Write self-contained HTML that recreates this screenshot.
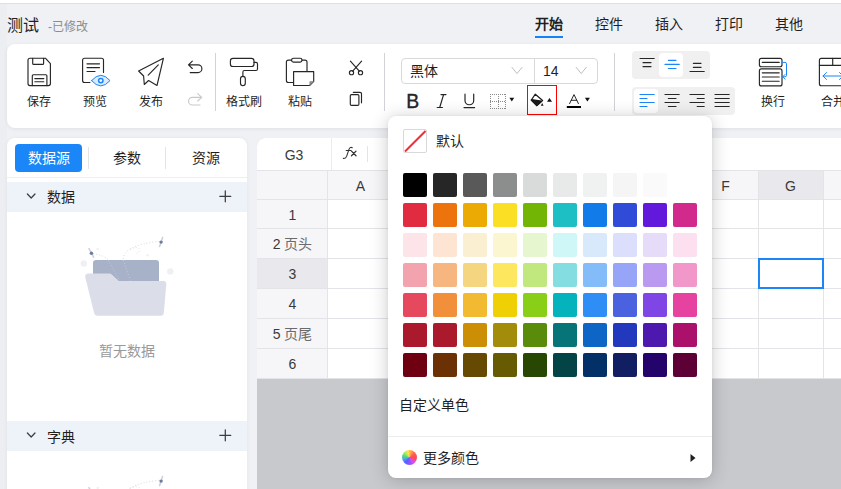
<!DOCTYPE html>
<html lang="zh-CN">
<head>
<meta charset="utf-8">
<title>测试</title>
<style>
*{box-sizing:border-box;margin:0;padding:0}
html,body{width:841px;height:489px;overflow:hidden}
body{position:relative;background:#eff1f5;font-family:"Liberation Sans",sans-serif;font-size:14px;color:#1f1f1f}
.abs{position:absolute}
.topstrip{left:0;top:0;width:841px;height:4px;background:#fff;border-bottom:1px solid #dfe0e3}
.title{left:7px;top:15px;font-size:16px;line-height:22px;color:#1f1f1f;white-space:nowrap}
.title small{font-size:12px;color:#8c8c8c;margin-left:9px}
.tab{top:14px;width:28px;font-size:14px;line-height:20px;color:#1f1f1f;white-space:nowrap;text-align:center}
.tab.on{font-weight:bold}
.tabline{left:535px;top:36px;width:28px;height:2px;background:#1284f8}
.toolbar{left:7px;top:44px;width:900px;height:84px;background:#fff;border-radius:8px;box-shadow:0 1px 4px rgba(0,0,0,.07)}
.lbl{font-size:12px;line-height:16px;color:#1f1f1f;white-space:nowrap;text-align:center;top:94px}
.vsep{width:1px;background:#d2d3d6;top:53px;height:58px}
svg{position:absolute;overflow:visible}
.sel{left:401px;top:58px;width:197px;height:26px;border:1px solid #d9d9d9;border-radius:4px;background:#fff}
.sel i{position:absolute;left:132px;top:0;width:1px;height:24px;background:#d9d9d9}
.grp{background:#f0f0f0;border-radius:4px;height:28px;left:632px}
.grp b{position:absolute;top:2px;width:24px;height:24px;background:#fff;border-radius:4px}
/* left panel */
.lp{left:7px;top:138px;width:240px;height:360px;background:#fff;border-radius:8px;overflow:hidden;box-shadow:0 0 4px rgba(0,0,0,.05)}
.lpbtn{left:8px;top:6px;width:67px;height:28px;border-radius:4px;background:#1a86f8;color:#fff;text-align:center;line-height:28px;font-size:14px}
.lptab{top:6px;width:60px;height:28px;line-height:28px;text-align:center;font-size:14px;color:#1f1f1f}
.lpsep{top:9px;width:1px;height:22px;background:#e4e4e6}
.lpline{left:0;top:39px;width:240px;height:1px;background:#eeeff2}
.sec{left:0;width:240px;height:30px;background:#eef3f9}
.sec span{position:absolute;left:40px;top:5px;line-height:20px;font-size:14px;color:#1f1f1f}
.empty{left:0;width:240px;text-align:center;font-size:14px;line-height:20px;color:#999}
/* grid */
.gridcard{left:257px;top:138px;width:600px;height:360px;background:#c7c9cd;border-radius:8px 0 0 0;overflow:hidden}
.fbar{left:0;top:0;width:600px;height:32px;background:#fff}
.hdr{left:0;top:32px;width:600px;height:30px;background:#f6f6f9}
.rowh{left:0;top:61px;width:71px;height:180px;background:#f6f6f9}
.cells{left:71px;top:62px;width:529px;height:179px;background:#fff}
.hl{height:1px;background:#e3e4e8;left:0;width:600px}
.vl{width:1px;background:#e3e4e8;top:32px;height:209px}
.gt{font-size:14px;line-height:20px;color:#3a3a3a;text-align:center;white-space:nowrap}
/* popup */
.pop{left:388px;top:116px;width:324px;height:362px;background:#fff;border-radius:8px;box-shadow:0 2px 18px rgba(0,0,0,.21),0 0 3px rgba(0,0,0,.06)}
.sw{position:absolute;width:24px;height:24px;border-radius:2px}
</style>
</head>
<body>
<div class="abs" style="left:0;top:0;width:7px;height:489px;background:#eceef2"></div>
<div class="abs topstrip"></div>
<div class="abs title">测试<small>-已修改</small></div>
<div class="abs tab on" style="left:535px">开始</div>
<div class="abs tab" style="left:595px">控件</div>
<div class="abs tab" style="left:655px">插入</div>
<div class="abs tab" style="left:715px">打印</div>
<div class="abs tab" style="left:775px">其他</div>
<div class="abs tabline"></div>

<div class="abs toolbar"></div>
<div class="abs" id="tb" style="left:0;top:0;width:841px;height:128px;overflow:hidden">
  <div class="abs lbl" style="left:27px;width:24px">保存</div>
  <div class="abs lbl" style="left:83px;width:24px">预览</div>
  <div class="abs lbl" style="left:139px;width:24px">发布</div>
  <div class="abs vsep" style="left:215px"></div>
  <div class="abs lbl" style="left:226px;width:36px">格式刷</div>
  <div class="abs lbl" style="left:288px;width:24px">粘贴</div>
  <div class="abs vsep" style="left:384px"></div>
  <div class="abs sel"><i></i></div>
  <div class="abs" style="left:410px;top:61px;font-size:14px;line-height:20px">黑体</div>
  <div class="abs" style="left:543px;top:61px;font-size:14px;line-height:20px">14</div>
  <div class="abs vsep" style="left:614px"></div>
  <div class="abs grp" style="top:51px;width:78px"><b style="left:27px"></b></div>
  <div class="abs grp" style="top:87px;width:103px"><b style="left:2px"></b></div>
  <div class="abs lbl" style="left:761px;width:24px">换行</div>
  <div class="abs lbl" style="left:821px;width:24px">合并</div>
  <div class="abs" style="left:527px;top:85px;width:30px;height:30px;border:1px solid #ff0000"></div>
<svg style="left:0;top:0" width="841" height="128" viewBox="0 0 841 128" fill="none" stroke="#262626" stroke-width="1.15" stroke-linecap="round" stroke-linejoin="round">
  <!-- save -->
  <path d="M30 58.2H45.4L50.4 63.6V83.6a2 2 0 0 1-2 2H30a2 2 0 0 1-2-2V60.2a2 2 0 0 1 2-2Z"/>
  <path d="M32.7 58.2V63.4a1 1 0 0 0 1 1H42.6a1 1 0 0 0 1-1V58.2"/>
  <path d="M32.3 85.6V75.7a1 1 0 0 1 1-1H45.9a1 1 0 0 1 1 1V85.6"/>
  <path d="M34.8 78.6H43.8M34.8 81.7H43.8"/>
  <!-- preview -->
  <path d="M103.5 72.5V60.2a2 2 0 0 0-2-2H84.6a2 2 0 0 0-2 2V80.5a2 2 0 0 0 2 2H90"/>
  <path d="M87 63.8H99.5M87 67.6H99.5M87 71.5H95"/>
  <path d="M91.6 80.6Q96.2 75.3 100.8 75.3Q105.4 75.3 110 80.6Q105.4 85.9 100.8 85.9Q96.2 85.9 91.6 80.6Z" fill="#d9ecff" stroke="#1a86f8" stroke-width="1"/>
  <circle cx="100.8" cy="80.6" r="2.2" fill="#fff" stroke="#1a86f8" stroke-width="1.5"/>
  <!-- publish -->
  <path d="M163.4 58.3L138.6 71L143.6 76L144.3 84.5L148.6 80.5L157 85.5Z"/>
  <path d="M148.2 75.2L158.3 64.9"/>
  <!-- undo / redo -->
  <path d="M192.3 61.1L188.5 64.8L192.3 68.5M188.5 64.8H198A3.9 3.9 0 0 1 198 72.6H190.2"/>
  <path d="M197.7 93.6L201.7 97.3L197.7 101M201.7 97.3H192.4A3.85 3.85 0 0 0 192.4 105H200" stroke="#c9c9cc"/>
  <!-- format painter -->
  <rect x="230.4" y="58.3" width="23.6" height="8.2" rx="2.6"/>
  <path d="M254 62.4H256a1.5 1.5 0 0 1 1.5 1.5V69a1.5 1.5 0 0 1-1.5 1.5H244.4a1.5 1.5 0 0 0-1.5 1.5V76.4"/>
  <rect x="240.5" y="76.4" width="4.8" height="9.3" rx="2.4"/>
  <!-- paste -->
  <path d="M307 71.5V62.1a2 2 0 0 0-2-2H302M291.6 60.1H288.4a2 2 0 0 0-2 2V80.5a2 2 0 0 0 2 2H293.5"/>
  <rect x="291.6" y="58.2" width="10.4" height="3.9" rx="1.9"/>
  <path d="M293.6 71.6H313.7V81.4L309.6 85.5H293.6Z"/>
  <path d="M313.4 81.6H309.8V85.2Z" fill="#8c8c8c" stroke="#8c8c8c" stroke-width="0.6"/>
  <!-- cut -->
  <path d="M350.4 61.2L359.3 71.1M361.6 61.2L352.7 71.1"/>
  <circle cx="351.5" cy="72.7" r="2.1"/><circle cx="360.5" cy="72.7" r="2.1"/>
  <!-- copy -->
  <rect x="350.3" y="94.6" width="8.6" height="10.8" rx="1.2"/>
  <path d="M353.3 92.3H360a1.5 1.5 0 0 1 1.5 1.5V102.8"/>
  <!-- select chevrons -->
  <path d="M512 67.4L517 73.6L522 67.4M576.2 67.4L581.2 73.6L586.2 67.4" stroke="#bfbfbf" stroke-width="1"/>
  <!-- B I U -->
  <text x="406.2" y="108" font-family="Liberation Sans, sans-serif" font-size="19.4" fill="#262626" stroke="#262626" stroke-width="0.35">B</text>
  <path d="M441 94.6H446M437.2 107.5H442.4M443.6 94.6L439.7 107.5" stroke-width="1.2"/>
  <path d="M465 94.2V100.4a4.35 4.35 0 0 0 8.7 0V94.2M464 107.6H474.6" stroke-width="1.2"/>
  <!-- border icon -->
  <path d="M490 94.5H506M490 108.5H506M490 101.5H506M490.5 94V109M505.5 94V109M498.5 94V109" stroke="#8a8a8a" stroke-width="1" stroke-dasharray="1 1" stroke-linecap="butt"/>
  <path d="M509.4 97.8H514.2L511.8 101.6Z" fill="#111" stroke="none"/>
  <!-- paint bucket -->
  <path d="M535.3 94.2L531.3 100L536.8 105.6L542.6 100.5Z" fill="#fff" stroke="#1a1a1a" stroke-width="1.2"/>
  <path d="M531.5 99.6L541.6 101.2L536.8 105.6L531.4 100.2Z" fill="#1a1a1a" stroke="#1a1a1a" stroke-width="1.2"/>
  <path d="M542.2 103.1L543.6 105.8H540.8Z" fill="#1a1a1a" stroke="none"/>
  <path d="M547 101.8H552L549.5 98.1Z" fill="#111" stroke="none"/>
  <!-- font color -->
  <path d="M569.6 103.6L574 94.6L578.4 103.6M571.3 100.3H576.7" stroke-width="1"/>
  <path d="M566.8 107H581" stroke="#000" stroke-width="2" stroke-linecap="butt"/>
  <path d="M584.9 97.8H589.9L587.4 101.6Z" fill="#111" stroke="none"/>
  <!-- v-align icons -->
  <path d="M640 58.5H654.2M643 62.6H651M643 66.6H651" stroke-width="1.2"/>
  <path d="M668.4 60.3H676M665 64.4H679.2M668.4 68.5H676" stroke="#1a86f8" stroke-width="1.2"/>
  <path d="M693.4 63.3H701M693.4 67.4H701M690 71.5H704.2" stroke-width="1.2"/>
  <!-- h-align icons -->
  <path d="M640 94.5H654.2M640 98.5H647M640 102.5H654.2M640 106.5H647" stroke="#1a86f8" stroke-width="1.2"/>
  <path d="M665 94.5H679.2M668.4 98.5H676M665 102.5H679.2M668.4 106.5H676" stroke-width="1.2"/>
  <path d="M690 94.5H704.2M697.2 98.5H704.2M690 102.5H704.2M697.2 106.5H704.2" stroke-width="1.2"/>
  <path d="M715 94.5H729.2M715 98.5H729.2M715 102.5H729.2M715 106.5H729.2" stroke-width="1.2"/>
  <!-- wrap -->
  <rect x="759.4" y="58.3" width="22.6" height="8.4" rx="2"/>
  <rect x="759.4" y="68.9" width="22.6" height="17" rx="2"/>
  <path d="M762.3 62.4H779.2M762.3 72.8H779.2M762.3 77H779.2M762.3 81.2H779.2"/>
  <path d="M782.2 62.4H785a1.5 1.5 0 0 1 1.5 1.5V75.3a1.5 1.5 0 0 1-1.5 1.5H782.8M785 74.5L782.7 76.8L785 79.1" stroke="#1a86f8" stroke-width="1"/>
  <!-- merge -->
  <rect x="819.4" y="58.3" width="27.4" height="27.4" rx="2"/>
  <path d="M819.4 65.4H846.8M832.7 58.3V65.4"/>
  <path d="M823 76H843M826.5 72.5L823 76L826.5 79.5M839.5 72.5L843 76L839.5 79.5" stroke="#1a86f8" stroke-width="1"/>
</svg>
</div>

<div class="abs lp">
  <div class="abs lpbtn">数据源</div>
  <div class="abs lpsep" style="left:81px"></div>
  <div class="abs lptab" style="left:90px">参数</div>
  <div class="abs lpsep" style="left:158px"></div>
  <div class="abs lptab" style="left:169px">资源</div>
  <div class="abs lpline"></div>
  <div class="abs sec" style="top:44px"><span>数据</span></div>
  <div class="abs empty" style="top:203px">暂无数据</div>
  <div class="abs sec" style="top:283px"><span style="top:6px">字典</span></div>
  <svg style="left:0;top:0" width="240" height="360" viewBox="7 138 240 360" fill="none">
    <defs>
      <g id="emp">
        <circle cx="83.8" cy="263.4" r="3.2" fill="#eef0f4"/>
        <circle cx="170.3" cy="271.4" r="3.2" fill="#eef0f4"/>
        <circle cx="97.7" cy="248.9" r="1.2" fill="#eef0f4"/>
        <circle cx="147.5" cy="255.3" r="1.2" fill="#eef0f4"/>
        <path d="M93 253.6Q104 255.5 108 259.5" stroke="#d3d7e2" stroke-width="1" stroke-dasharray="1 2"/>
        <path d="M159.5 241.3Q142 243 131 248.5Q123.5 252.5 123.2 260" stroke="#d3d7e2" stroke-width="1" stroke-dasharray="1 2"/>
        <path d="M130 249.5Q138 245.5 139.5 249Q140 253 134.5 254" stroke="#dde0e9" stroke-width="1" stroke-dasharray="1 2"/>
        <path d="M96 260.1H156a3 3 0 0 1 3 3V282H93V263.1a3 3 0 0 1 3-3Z" fill="#a7b1c8"/>
        <path d="M108 260L119.8 280.5M123.2 260L130.4 280.5" stroke="#c3c9da" stroke-width="1" stroke-dasharray="1 2"/>
        <path d="M88.2 273.4H109.4a3 3 0 0 1 2.1 0.9L118.8 281H163.3a3 3 0 0 1 3 3.3L163.8 313a3 3 0 0 1-3 2.7H97.2a3 3 0 0 1-3-2.4L85.2 277a3 3 0 0 1 3-3.6Z" fill="#dbdee8"/>
        <path d="M89 248.6L93.6 257.2" stroke="#cdd2de" stroke-width="1.6" stroke-linecap="round"/>
        <circle cx="91.4" cy="253.2" r="1.7" fill="#6f7d9c"/>
        <path d="M162.6 237.4L159.6 246.6" stroke="#cdd2de" stroke-width="1.6" stroke-linecap="round"/>
        <circle cx="161.1" cy="242.1" r="1.7" fill="#6f7d9c"/>
      </g>
    </defs>
    <use href="#emp"/>
    <use href="#emp" transform="translate(0 239)"/>
    <g stroke="#3d3d3d" stroke-width="1.25" stroke-linecap="round" stroke-linejoin="round">
      <path d="M27.4 194L31.2 198L35 194M219.8 196.3H230.8M225.3 190.8V201.8"/>
      <path d="M27.4 433L31.2 437L35 433M219.8 435.3H230.8M225.3 429.8V440.8"/>
    </g>
  </svg>
</div>

<div class="abs gridcard">
  <div class="abs fbar"></div>
  <div class="abs hdr"></div>
  <div class="abs rowh"></div>
  <div class="abs cells"></div>
  <div class="abs" style="left:501px;top:32px;width:66px;height:30px;background:#e9e9ed"></div>
  <div class="abs" style="left:0;top:120px;width:71px;height:30px;background:#e9e9ed"></div>
  <div class="abs hl" style="top:32px"></div>
  <div class="abs hl" style="top:61px"></div>
  <div class="abs hl" style="top:90px"></div>
  <div class="abs hl" style="top:120px"></div>
  <div class="abs hl" style="top:150px"></div>
  <div class="abs hl" style="top:180px"></div>
  <div class="abs hl" style="top:210px"></div>
  <div class="abs hl" style="top:240px"></div>
  <div class="abs vl" style="left:70px"></div>
  <div class="abs vl" style="left:136px"></div>
  <div class="abs vl" style="left:211px"></div>
  <div class="abs vl" style="left:286px"></div>
  <div class="abs vl" style="left:361px"></div>
  <div class="abs vl" style="left:436px"></div>
  <div class="abs vl" style="left:501px"></div>
  <div class="abs vl" style="left:566px"></div>
  <div class="abs" style="left:74px;top:0;width:1px;height:32px;background:#ececef"></div>
  <div class="abs gt" style="left:0;top:7px;width:74px">G3</div>
  <svg style="left:0;top:0" width="584" height="32" viewBox="257 138 584 32" fill="none" stroke="#333" stroke-linecap="round" stroke-linejoin="round"><title>fx</title><path d="M352.3 147.7Q349.9 146.6 348.9 149.6L346.6 156.4Q345.6 158.9 343.3 158.4M346.2 150.5H351" stroke-width="1.1"/><path d="M351.5 151.1L356 155.7M356 151.1L351.5 155.7" stroke-width="1.3"/></svg>
  <div class="abs" style="left:110px;top:8px;width:1px;height:16px;background:#e4e4e6"></div>
  <div class="abs gt" style="left:71px;top:38px;width:65px">A</div>
  <div class="abs gt" style="left:136px;top:38px;width:75px">B</div>
  <div class="abs gt" style="left:211px;top:38px;width:75px">C</div>
  <div class="abs gt" style="left:286px;top:38px;width:75px">D</div>
  <div class="abs gt" style="left:361px;top:38px;width:75px">E</div>
  <div class="abs gt" style="left:436px;top:38px;width:65px">F</div>
  <div class="abs gt" style="left:501px;top:38px;width:65px">G</div>
  <div class="abs gt" style="left:566px;top:38px;width:65px">H</div>
  <div class="abs gt" style="left:0;top:67px;width:71px">1</div>
  <div class="abs gt" style="left:0;top:96px;width:71px">2 <span style="color:#6b6b6b">页头</span></div>
  <div class="abs gt" style="left:0;top:126px;width:71px">3</div>
  <div class="abs gt" style="left:0;top:156px;width:71px">4</div>
  <div class="abs gt" style="left:0;top:186px;width:71px">5 <span style="color:#6b6b6b">页尾</span></div>
  <div class="abs gt" style="left:0;top:216px;width:71px">6</div>
  <div class="abs" style="left:501px;top:120px;width:66px;height:31px;border:2px solid #1a86f8"></div>
</div>

<div class="abs pop" id="pop">
  <div class="sw" style="left:15px;top:13px;border:1px solid #d9d9d9;background:#fff;overflow:hidden"><svg style="left:-1px;top:-1px" width="24" height="24" viewBox="0 0 24 24"><path d="M2 22.5L22.5 2" stroke="#e8303f" stroke-width="2" fill="none"/></svg></div>
  <div class="abs" style="left:48px;top:15px;font-size:14px;line-height:20px;color:#1f1f1f">默认</div>
  <div class="sw" style="left:15px;top:57px;background:#000000"></div>
  <div class="sw" style="left:45px;top:57px;background:#262626"></div>
  <div class="sw" style="left:75px;top:57px;background:#595959"></div>
  <div class="sw" style="left:105px;top:57px;background:#8c8e8d"></div>
  <div class="sw" style="left:135px;top:57px;background:#d9dbda"></div>
  <div class="sw" style="left:165px;top:57px;background:#e8e9e9"></div>
  <div class="sw" style="left:195px;top:57px;background:#f0f1f1"></div>
  <div class="sw" style="left:225px;top:57px;background:#f5f5f5"></div>
  <div class="sw" style="left:255px;top:57px;background:#fafafa"></div>
  <div class="sw" style="left:285px;top:57px;background:#ffffff"></div>
  <div class="sw" style="left:15px;top:87px;background:#e02b40"></div>
  <div class="sw" style="left:45px;top:87px;background:#ed740c"></div>
  <div class="sw" style="left:75px;top:87px;background:#ebab04"></div>
  <div class="sw" style="left:105px;top:87px;background:#fbdf25"></div>
  <div class="sw" style="left:135px;top:87px;background:#73b504"></div>
  <div class="sw" style="left:165px;top:87px;background:#1dbfc4"></div>
  <div class="sw" style="left:195px;top:87px;background:#127bea"></div>
  <div class="sw" style="left:225px;top:87px;background:#2f4bd8"></div>
  <div class="sw" style="left:255px;top:87px;background:#6319db"></div>
  <div class="sw" style="left:285px;top:87px;background:#d12a8c"></div>
  <div class="sw" style="left:15px;top:117px;background:#fce4e8"></div>
  <div class="sw" style="left:45px;top:117px;background:#fee5d3"></div>
  <div class="sw" style="left:75px;top:117px;background:#faefd0"></div>
  <div class="sw" style="left:105px;top:117px;background:#fbf6cf"></div>
  <div class="sw" style="left:135px;top:117px;background:#e6f7cf"></div>
  <div class="sw" style="left:165px;top:117px;background:#cff7f7"></div>
  <div class="sw" style="left:195px;top:117px;background:#d9e9fc"></div>
  <div class="sw" style="left:225px;top:117px;background:#dbdffc"></div>
  <div class="sw" style="left:255px;top:117px;background:#e6dcfa"></div>
  <div class="sw" style="left:285px;top:117px;background:#fde0ef"></div>
  <div class="sw" style="left:15px;top:147px;background:#f3a3ad"></div>
  <div class="sw" style="left:45px;top:147px;background:#f7b680"></div>
  <div class="sw" style="left:75px;top:147px;background:#f5d57f"></div>
  <div class="sw" style="left:105px;top:147px;background:#fde75e"></div>
  <div class="sw" style="left:135px;top:147px;background:#c0e87f"></div>
  <div class="sw" style="left:165px;top:147px;background:#84dde0"></div>
  <div class="sw" style="left:195px;top:147px;background:#84bbf9"></div>
  <div class="sw" style="left:225px;top:147px;background:#97a5f8"></div>
  <div class="sw" style="left:255px;top:147px;background:#b99af0"></div>
  <div class="sw" style="left:285px;top:147px;background:#f297ca"></div>
  <div class="sw" style="left:15px;top:177px;background:#e6495e"></div>
  <div class="sw" style="left:45px;top:177px;background:#f28f3a"></div>
  <div class="sw" style="left:75px;top:177px;background:#f2ba30"></div>
  <div class="sw" style="left:105px;top:177px;background:#efd005"></div>
  <div class="sw" style="left:135px;top:177px;background:#8acf17"></div>
  <div class="sw" style="left:165px;top:177px;background:#05b3bc"></div>
  <div class="sw" style="left:195px;top:177px;background:#2f8ef5"></div>
  <div class="sw" style="left:225px;top:177px;background:#4a61e0"></div>
  <div class="sw" style="left:255px;top:177px;background:#8045e5"></div>
  <div class="sw" style="left:285px;top:177px;background:#e643a1"></div>
  <div class="sw" style="left:15px;top:207px;background:#ab192d"></div>
  <div class="sw" style="left:45px;top:207px;background:#ab192d"></div>
  <div class="sw" style="left:75px;top:207px;background:#cc8e04"></div>
  <div class="sw" style="left:105px;top:207px;background:#a38c09"></div>
  <div class="sw" style="left:135px;top:207px;background:#5a8c0c"></div>
  <div class="sw" style="left:165px;top:207px;background:#077478"></div>
  <div class="sw" style="left:195px;top:207px;background:#0d66c6"></div>
  <div class="sw" style="left:225px;top:207px;background:#2239bd"></div>
  <div class="sw" style="left:255px;top:207px;background:#4d18ad"></div>
  <div class="sw" style="left:285px;top:207px;background:#ab116b"></div>
  <div class="sw" style="left:15px;top:237px;background:#6e0012"></div>
  <div class="sw" style="left:45px;top:237px;background:#6b3003"></div>
  <div class="sw" style="left:75px;top:237px;background:#664a03"></div>
  <div class="sw" style="left:105px;top:237px;background:#665a03"></div>
  <div class="sw" style="left:135px;top:237px;background:#284703"></div>
  <div class="sw" style="left:165px;top:237px;background:#034447"></div>
  <div class="sw" style="left:195px;top:237px;background:#033066"></div>
  <div class="sw" style="left:225px;top:237px;background:#111e61"></div>
  <div class="sw" style="left:255px;top:237px;background:#24036b"></div>
  <div class="sw" style="left:285px;top:237px;background:#5c0036"></div>
  <div class="abs" style="left:11px;top:279px;font-size:14px;line-height:20px;color:#1f1f1f">自定义单色</div>
  <div class="abs" style="left:0;top:320px;width:324px;height:1px;background:#ededee"></div>
  <div class="abs" style="left:13.5px;top:334.3px;width:15px;height:15px;border-radius:50%;background:conic-gradient(from 90deg,#ff4a55 0%,#ff4a68 4%,#d84df5 14%,#a050ff 22%,#5a5cff 36%,#4fa0f0 45%,#52e07a 55%,#b6ec55 64%,#ffe14d 71%,#ff9a4d 80%,#ff5a55 90%,#ff4a55)"></div>
  <div class="abs" style="left:35px;top:332px;font-size:14px;line-height:20px;color:#1f1f1f">更多颜色</div>
  <svg style="left:302px;top:338px" width="6" height="8" viewBox="0 0 6 8"><path d="M0.5 0L5.5 4L0.5 8Z" fill="#1f1f1f"/></svg>
</div>
</body>
</html>
